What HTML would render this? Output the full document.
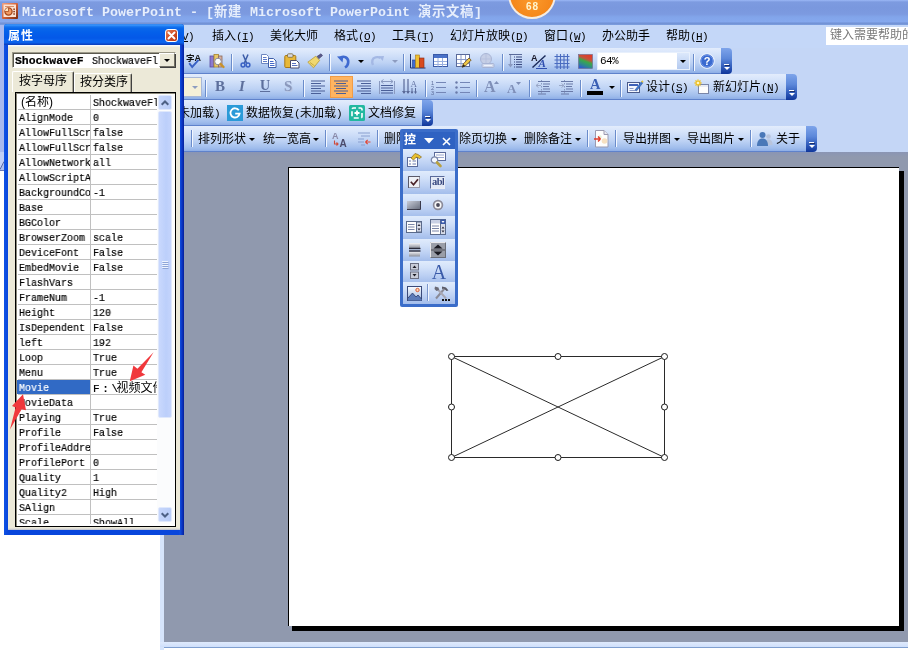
<!DOCTYPE html>
<html lang="zh-CN">
<head>
<meta charset="utf-8">
<title>Microsoft PowerPoint</title>
<style>
*{box-sizing:border-box;margin:0;padding:0}
html,body{width:908px;height:650px;overflow:hidden;background:#fff}
body{position:relative;font-family:"Liberation Sans","Noto Sans CJK SC",sans-serif;font-size:12px;color:#000;line-height:1}
.a{position:absolute}
svg{position:absolute;overflow:visible;will-change:transform}
/* app title bar */
#title{left:0;top:0;width:908px;height:25px;background:linear-gradient(#9bb8f6 0,#7d9be0 2px,#7a98de 8px,#7c9ae0 14px,#82a5ea 17px,#85a8ee 22px,#6f8fd3 23px,#7d9fe0 25px)}
#ttext{left:22px;top:3.5px;height:18px;white-space:nowrap;font:bold 13.33px/18px "Liberation Mono","Noto Sans CJK SC",monospace;color:#e6eefc}
#ttext b{font-weight:bold;letter-spacing:.67px}
#badge{left:508px;top:-30px;width:48px;height:48.500px;border-radius:50%;border:2px solid #f4ece2;background:radial-gradient(circle at 50% 60%,#fb9a2c 0,#f4861a 60%,#ee7c12 100%)}
#badget{left:518px;top:1px;width:28px;height:12px;text-align:center;font:bold 10px/12px "Liberation Sans",sans-serif;color:#fff6cf;letter-spacing:1px;text-indent:1px}
/* menu bar */
#menubar{left:0;top:25px;width:908px;height:23px;background:#c4d7f8}
.mi{position:absolute;top:29px;height:14px;line-height:14px;white-space:nowrap;font-size:12px}
.l{font-family:"Liberation Mono",monospace;font-size:11px;letter-spacing:-0.6px}
.u{text-decoration:underline}
#ask{left:826px;top:27px;width:82px;height:18px;background:#fff;color:#7a7a7a;font-size:12px;line-height:16px;padding-left:4px;white-space:nowrap;overflow:hidden}
/* toolbars */
#dock{left:0;top:48px;width:908px;height:104px;background:#c4d6f6}
.tb{position:absolute;height:26px;background:linear-gradient(#e3ecfc 0,#d5e3fa 6px,#bdd2f4 15px,#a0bdec 22px,#8eaee6 25px,#5f82cb 25px,#5f82cb 26px);border-radius:0 3px 3px 0}
.cap{position:absolute;width:11px;height:26px;border-radius:0 4px 4px 0;background:linear-gradient(#7ea4ea 0,#5c88da 40%,#2d58b8 75%,#10369a 100%)}
.cap:before{content:"";position:absolute;left:3px;top:16px;width:5px;height:1px;background:#fff;box-shadow:1px 1px 0 #1a2f6a}
.cap:after{content:"";position:absolute;left:3px;top:19px;border:3px solid transparent;border-top:3px solid #fff;border-bottom:0;width:0;height:0}
.sep{position:absolute;width:1px;height:17px;background:#6a8ccb;box-shadow:1px 0 0 #f4f8ff}
.tt{position:absolute;height:14px;line-height:14px;white-space:nowrap;font-size:12px}
.dd{position:absolute;width:0;height:0;border:3px solid transparent;border-top:3px solid #000;border-bottom:0}
.dd.g{border-top-color:#8d9cc0}
/* workspace */
#lstrip{left:160px;top:535px;width:4px;height:115px;background:#d6e4fb}
#ws{left:164px;top:152px;width:744px;height:490px;background:linear-gradient(#8a95b4 0,#9099ae 5px,#9099ae 100%)}
#bstrip{left:160px;top:642px;width:748px;height:5px;background:linear-gradient(#dfeafd,#cfdffa)}
#bline{left:164px;top:647px;width:744px;height:3px;background:linear-gradient(#7f9fd0 0,#7f9fd0 1px,#fff 1px)}
#slsh{left:292px;top:171px;width:612px;height:460px;background:#000}
#slide{left:288px;top:167px;width:611px;height:459px;background:#fff;border:1px solid #000;border-right:0;border-bottom:0}
/* props window */
#pw{left:4px;top:24px;width:180px;height:511px;background:linear-gradient(90deg,#0f52e4 0,#0846dc 4px,#0846dc 175px,#0f4ee0 176px,#0a36c4 178px,#061f9a 180px);border-radius:3px 3px 0 0}
#pwt{left:0;top:0;width:180px;height:21px;border-radius:3px 3px 0 0;background:linear-gradient(#2a78e6 0,#3f9cff 1px,#2280f4 2px,#0a68ea 4px,#0460ea 8px,#0458e8 14px,#0a64ee 17px,#0a60ea 19px,#0a42c2 20px,#0a42c2 21px)}
#pwtt{left:4px;top:5px;height:14px;line-height:14px;font-weight:bold;font-size:12px;color:#fff;letter-spacing:1px;white-space:nowrap}
#pwx{left:161px;top:5px;width:13px;height:13px;border:1px solid #fff;border-radius:3px;background:linear-gradient(135deg,#e8825a 0,#d2522a 45%,#b8340e 100%)}
#pwc{left:4px;top:21px;width:172px;height:485px;background:linear-gradient(#f6f9fc 0,#f6f9fc 1px,#ece9d8 2px,#ece9d8 483px,#b9bcd0 485px)}
#combo{left:8px;top:28px;width:164px;height:16px;background:#fff;border:1px solid #9d9a8a;border-right-color:#fff;border-bottom-color:#fff;box-shadow:inset 1px 1px 0 #5a584e}
#combob{left:155px;top:29px;width:16px;height:14px;background:#ece9d8;border:1px solid #fff;border-right-color:#716f64;border-bottom-color:#716f64;box-shadow:1px 1px 0 #404040}
.mono{font-family:"Liberation Mono","Noto Sans CJK SC",monospace;font-size:11px;line-height:14px;white-space:nowrap;transform:scaleX(.909);transform-origin:0 0;display:block;position:absolute}
.tab{position:absolute;background:#ece9d8;border:1px solid #fff;border-right-color:#404040;border-bottom:0;border-radius:2px 2px 0 0;font-size:12px;line-height:14px;white-space:nowrap;box-shadow:inset -1px 0 0 #aca899}
#list{left:11px;top:68px;width:161px;height:435px;background:#fff;border:1px solid #000;box-shadow:inset 1px 1px 0 #8c8a7c;padding:1px;overflow:hidden}
#listi{left:1px;top:1px;width:158px;height:430px;overflow:hidden}
.r{position:absolute;left:1px;width:139px;height:15px;border-top:1px solid #c0c0c0}
.r .k{position:absolute;left:0;top:1px;width:72px;height:14px;overflow:hidden}
.r .v{position:absolute;left:72px;top:0;width:67px;height:15px;overflow:hidden;border-left:1px solid #c0c0c0}
.r .k span{left:1px;top:0}
.r .v span{left:2px;top:1px}
.r.sel .k{background:#316ac5;color:#fff}
#sb{left:140px;top:0;width:18px;height:431px;background:#fbfcfd}
.sbb{position:absolute;left:1px;width:14px;height:15px;border-radius:2px;background:linear-gradient(90deg,#c6d6fb,#b9cdf8);border:1px solid #dfe8fc}
#thumb{position:absolute;left:1px;top:17px;width:14px;height:307px;border-radius:2px;background:linear-gradient(90deg,#c9d8fd,#bccffb 60%,#c4d4fc);border:1px solid #dfe8fc}
/* toolbox */
#tbx{left:400px;top:129px;width:58px;height:178px;background:#3b6dc9;border-radius:2px}
#tbxt{left:3px;top:3px;width:52px;height:17px;background:#2f62c2}
.tr{position:absolute;left:3px;width:52px;height:22px;background:linear-gradient(#e0ebfc 0,#d2e1f9 30%,#bcd0f3 65%,#a3bdeb 100%)}
#listi .r:first-child{border-top-color:transparent}
.cj{position:absolute;top:1px;font:12px/14px "Liberation Sans","Noto Sans CJK SC",sans-serif;white-space:nowrap}
.r .k .cj{top:0}
.mi,.tt,.mono,.cj,.tab,#ttext,#pwtt,#ask,#badget{will-change:transform}
.mono{-webkit-text-stroke:.2px #000}
.r.sel .k .mono{-webkit-text-stroke:.2px #fff}
.r.sel .k{left:-1px;top:0;width:73px;height:14px}
.r.sel .k .mono{left:2px;top:1px}
.lm{font-family:"Liberation Mono",monospace;font-size:11px;letter-spacing:2.7px;margin-right:-4.4px;-webkit-text-stroke:.2px #000}
.a,#tbx div{will-change:transform}

</style>
</head>
<body>
<div class="a" id="title"></div>
<svg style="left:2px;top:3px" width="16" height="16" viewBox="0 0 16 16"><defs><linearGradient id="pig" x1="0" y1="0" x2="1" y2="1"><stop offset="0" stop-color="#f0a080"/><stop offset=".5" stop-color="#d2623a"/><stop offset="1" stop-color="#7a2a0c"/></linearGradient></defs><rect x="0" y="0" width="16" height="16" rx="1" fill="url(#pig)"/><rect x="1.500" y="1.500" width="12.500" height="12.500" fill="#fce3d2"/><path d="M3 3.500h9" stroke="#d9906c" stroke-width="1"/><circle cx="6.500" cy="8.500" r="3.600" fill="#f19a62" stroke="#a8481a" stroke-width="1.300"/><path d="M6.500 8.500V5A3.500 3.500 0 0 0 3 8.500z" fill="#fde6c4"/><path d="M6.500 8.500V5M6.500 8.500H3" stroke="#a8481a" stroke-width=".8"/><rect x="11.300" y="5.500" width="1.600" height="1.400" fill="#8a3510"/><rect x="11.300" y="7.900" width="1.600" height="1.400" fill="#8a3510"/><rect x="11.300" y="10.300" width="1.600" height="1.400" fill="#8a3510"/></svg>
<div class="a" id="ttext">Microsoft PowerPoint - [<b>新建</b> Microsoft PowerPoint <b>演示文稿</b>]</div>
<div class="a" id="badge"></div><div class="a" id="badget">68</div>
<div class="a" id="menubar"></div>
<div class="mi" style="left:181.5px"><span class="l"><span class="u">V</span>)</span></div>
<div class="mi" style="left:211.5px">插入<span class="l">(<span class="u">I</span>)</span></div>
<div class="mi" style="left:269.5px">美化大师</div>
<div class="mi" style="left:333.5px">格式<span class="l">(<span class="u">O</span>)</span></div>
<div class="mi" style="left:391.5px">工具<span class="l">(<span class="u">T</span>)</span></div>
<div class="mi" style="left:449.5px">幻灯片放映<span class="l">(<span class="u">D</span>)</span></div>
<div class="mi" style="left:543.5px">窗口<span class="l">(<span class="u">W</span>)</span></div>
<div class="mi" style="left:601.5px">办公助手</div>
<div class="mi" style="left:665.5px">帮助<span class="l">(<span class="u">H</span>)</span></div>
<div class="a" id="ask">键入需要帮助的</div>
<div class="a" id="dock"></div>
<div class="tb" style="left:0;top:48px;width:723px"></div><div class="cap" style="left:721px;top:48px"></div>
<div class="tb" style="left:0;top:74px;width:788px"></div><div class="cap" style="left:786px;top:74px"></div>
<div class="tb" style="left:0;top:100px;width:424px"></div><div class="cap" style="left:422px;top:100px"></div>
<div class="tb" style="left:0;top:126px;width:808px"></div><div class="cap" style="left:806px;top:126px"></div>
<svg style="left:186px;top:53px" width="16" height="16" viewBox="0 0 16 16"><text x="0" y="7.5" font-family="Noto Sans CJK SC,sans-serif" font-size="8.5" font-weight="bold" fill="#111">字</text><text x="8.5" y="8" font-family="Liberation Sans,sans-serif" font-size="9" font-weight="bold" fill="#111">A</text><path d="M3.2 10.2L6.2 14L12.6 6.8" fill="none" stroke="#3a62c4" stroke-width="1.9"/></svg>
<svg style="left:209px;top:53px" width="16" height="16" viewBox="0 0 16 16"><rect x="1" y="3" width="4" height="11" fill="#8c7ad0" stroke="#5a4aa0" stroke-width=".8"/><rect x="5" y="1.5" width="4.5" height="12.5" fill="#e9c86a" stroke="#a8842a" stroke-width=".8"/><rect x="9.5" y="3" width="3.5" height="11" fill="#d9b0a0" stroke="#8a6a5a" stroke-width=".8"/><circle cx="9" cy="8.5" r="3.3" fill="#fdfdfd" stroke="#8a8a98" stroke-width="1"/><path d="M11.5 11L14.5 14" stroke="#c8922a" stroke-width="2.4" stroke-linecap="round"/></svg>
<div class="sep" style="left:231px;top:54px"></div>
<svg style="left:240px;top:53px" width="11" height="16" viewBox="0 0 11 16"><path d="M3 1.5L6.6 10M8 1.5L4.400 10" stroke="#3d5da8" stroke-width="1.500" fill="none"/><circle cx="3" cy="12" r="1.900" fill="none" stroke="#3a62c4" stroke-width="1.500"/><circle cx="8" cy="12" r="1.900" fill="none" stroke="#3a62c4" stroke-width="1.500"/></svg>
<svg style="left:261px;top:53px" width="16" height="16" viewBox="0 0 16 16"><path d="M.5 1.5h5l2 2v7h-7z" fill="#fff" stroke="#6d86c0"/><path d="M2 4.500h3.500M2 6.500h4M2 8.500h4" stroke="#5d7ac8"/><path d="M7.500 5.500h5l2.500 2.500v6.500h-7.500z" fill="#fff" stroke="#3f5ea8"/><path d="M9 8.500h3.500M9 10.500h4.500M9 12.500h4.500" stroke="#4468c8"/></svg>
<svg style="left:284px;top:53px" width="16" height="16" viewBox="0 0 16 16"><rect x=".8" y="2.500" width="11" height="12" rx="1" fill="#e8b838" stroke="#a87818"/><rect x="3.500" y=".8" width="5.500" height="3.500" rx="1" fill="#d8d8e0" stroke="#7a6a3a" stroke-width=".8"/><path d="M6.500 7.500h6l2.500 2.500v5h-8.500z" fill="#fff" stroke="#4a4a6a"/><path d="M8 10.500h4M8 12.500h5.500" stroke="#5a72c0"/></svg>
<svg style="left:307px;top:53px" width="16" height="16" viewBox="0 0 16 16"><path d="M10 3.5L14 .8L15.5 2.6L11.8 5.8z" fill="#5a5a8a" stroke="#3a3a6a" stroke-width=".6"/><path d="M8.8 3.2L12.6 7.4L6.5 14.8L.8 9.2z" fill="#f0d870" stroke="#b89a30" stroke-width=".8"/><path d="M3 9.5L7.5 12.8" stroke="#c8aa40" stroke-width="1"/></svg>
<div class="sep" style="left:329px;top:54px"></div>
<svg style="left:336px;top:53px" width="16" height="16" viewBox="0 0 16 16"><path d="M9 14.5C13 12 13.5 6 9.5 4.2C8 3.6 6 3.8 4.5 5" fill="none" stroke="#3f6ad0" stroke-width="2.6"/><path d="M1 3.5L7.5 3L6.5 9.5z" fill="#3f6ad0"/></svg>
<div class="dd" style="left:358px;top:60px"></div>
<svg style="left:370px;top:53px" width="16" height="16" viewBox="0 0 16 16"><path d="M3 12C1.5 9 2 5.2 5.5 4.4C7 4 9 4 10.5 5" fill="none" stroke="#a4b8e4" stroke-width="2.4"/><path d="M14 3L8.5 3.2L12.8 8z" fill="#a4b8e4"/></svg>
<div class="dd g" style="left:392px;top:60px"></div>
<div class="sep" style="left:403px;top:54px"></div>
<svg style="left:410px;top:53px" width="16" height="16" viewBox="0 0 16 16"><path d="M.5 1v14h15" fill="none" stroke="#1f2f6a" stroke-width="1"/><rect x="2.5" y="7" width="3" height="7.5" fill="#3f6ad0" stroke="#1f3f8a" stroke-width=".6"/><rect x="5.5" y="2" width="4" height="12.5" fill="#f0c030" stroke="#a87818" stroke-width=".6"/><rect x="9.5" y="5" width="4.5" height="9.5" fill="#d84a20" stroke="#8a2a10" stroke-width=".6"/></svg>
<svg style="left:433px;top:53px" width="16" height="16" viewBox="0 0 16 16"><rect x=".5" y="1.5" width="14" height="12" fill="#fff" stroke="#3a5aa8"/><rect x="1" y="2" width="13" height="3" fill="#4a72c8"/><path d="M1 8.5h13M1 11.5h13M5 5v8.5M9.5 5v8.5" stroke="#9ab0e0" stroke-width="1"/></svg>
<svg style="left:456px;top:53px" width="16" height="16" viewBox="0 0 16 16"><rect x=".5" y="1.5" width="13" height="12" fill="#fff" stroke="#5a6a9a"/><path d="M1 6.5h12.5M1 10.5h12.5M5 2v11.5M9.5 2v11.5" stroke="#8a9ac8" stroke-width="1"/><path d="M6.2 14.2L7.2 11L13 5L15.2 7L9.4 13z" fill="#f0c848" stroke="#6a4a1a" stroke-width=".8"/><path d="M6 14.6L7.3 11.2L9.3 13z" fill="#222"/></svg>
<svg style="left:479px;top:53px" width="16" height="16" viewBox="0 0 16 16"><circle cx="7" cy="6" r="5.5" fill="#c6cfe6" stroke="#a8b4d4"/><path d="M2 6h10M7 .8v10.4" stroke="#b4bedc" stroke-width=".8"/><rect x="3" y="10.5" width="12" height="4" rx="1" fill="#d0d8ec" stroke="#a8b4d4"/><path d="M5 12.5h8" stroke="#eef2fb"/></svg>
<div class="sep" style="left:502px;top:54px"></div>
<svg style="left:507px;top:53px" width="17" height="16" viewBox="0 0 17 16"><path d="M3.5 1.5v12" stroke="#8a9ac0" stroke-width="1.2"/><path d="M1 11l2.5 3.5L6 11z" fill="#8a9ac0"/><path d="M2 1.5h13" stroke="#5a6a9a" stroke-width="1"/><path d="M9 4h6M9 6.5h6M9 9h6M9 11.5h6M9 14h6" stroke="#3a4a80" stroke-width="1.2"/><path d="M7 4h1M7 6.5h1M7 9h1M7 11.5h1M7 14h1" stroke="#3a4a80" stroke-width="1.2"/></svg>
<svg style="left:531px;top:53px" width="16" height="16" viewBox="0 0 16 16"><text x="0" y="8" font-family="Liberation Sans,sans-serif" font-size="9" font-weight="bold" fill="#1a1a2a">A</text><path d="M1.5 14.5L14.5 2.5" stroke="#1a2a5a" stroke-width="1.4"/><text x="7.5" y="14.2" font-family="Liberation Serif,serif" font-size="11" font-weight="bold" font-style="italic" fill="#2f4fb0">A</text><path d="M5 15.5h11" stroke="#2f4fb0" stroke-width="1"/></svg>
<svg style="left:554px;top:53px" width="16" height="16" viewBox="0 0 16 16"><path d="M3 1v15M6.5 1v15M10 1v15M13.5 1v15M.5 3.5h15M.5 7h15M.5 10.500h15M.5 14h15" stroke="#4a6cc0" stroke-width="1.1"/></svg>
<svg style="left:578px;top:54px" width="15" height="15" viewBox="0 0 15 15"><defs><linearGradient id="cg" x1=".7" y1="0" x2=".3" y2="1"><stop offset="0" stop-color="#e03a28"/><stop offset=".3" stop-color="#c8503a"/><stop offset=".5" stop-color="#3aa84a"/><stop offset=".75" stop-color="#2f8a8a"/><stop offset="1" stop-color="#2f5ad0"/></linearGradient></defs><rect x=".5" y=".5" width="14" height="14" fill="url(#cg)" stroke="#6a6a8a" stroke-width=".6"/></svg>
<div class="a" style="left:597px;top:52px;width:93px;height:18px;background:#fff;border:1px solid #e8f0fc"></div>
<div class="a" style="left:677px;top:53px;width:12px;height:16px;background:linear-gradient(#dce8fb,#b4caf0)"></div>
<div class="dd" style="left:680px;top:60px"></div>
<div class="tt" style="left:600px;top:53px"><span class="l">64%</span></div>
<div class="sep" style="left:693px;top:54px"></div>
<svg style="left:699px;top:53px" width="16" height="16" viewBox="0 0 16 16"><circle cx="8" cy="8" r="7.3" fill="#3a6ad0" stroke="#e8f0fc" stroke-width="1.2"/><circle cx="8" cy="8" r="6" fill="none" stroke="#6f94e6" stroke-width="1"/><text x="8" y="12" text-anchor="middle" font-family="Liberation Sans,sans-serif" font-size="11" font-weight="bold" fill="#fff">?</text></svg>
<div class="a" style="left:160px;top:77px;width:42px;height:20px;background:#f6f0d8;border:1px solid #a8b8d8"></div>
<div class="dd g" style="left:192px;top:86px"></div>
<div class="sep" style="left:205px;top:80px"></div>
<div class="a" style="left:215px;top:78px;width:12px;height:17px;font:bold 15px/17px 'Liberation Serif',serif;color:#5d6f9c">B</div>
<div class="a" style="left:239px;top:78px;width:12px;height:17px;font:italic bold 15px/17px 'Liberation Serif',serif;color:#5d6f9c">I</div>
<div class="a" style="left:260px;top:78px;width:12px;height:17px;font:bold 14px/16px 'Liberation Serif',serif;color:#5d6f9c;text-decoration:underline">U</div>
<div class="a" style="left:284px;top:78px;width:12px;height:17px;font:bold 15px/17px 'Liberation Serif',serif;color:#8a98bc;text-shadow:1px 1px 0 #b8c6e4">S</div>
<div class="sep" style="left:303px;top:80px"></div>
<svg style="left:311px;top:80px" width="14" height="15" viewBox="0 0 14 15"><path d="M0 1h14M0 3.500h10M0 6h14M0 8.500h10M0 11h14M0 13.500h10" stroke="#4a5f98" stroke-width="1.2"/></svg>
<div class="a" style="left:330px;top:76px;width:23px;height:22px;background:#ffb460;border:1px solid #f29c45"></div>
<svg style="left:334px;top:80px" width="14" height="15" viewBox="0 0 14 15"><path d="M0 1h14M2 3.500h10M0 6h14M2 8.500h10M0 11h14M2 13.500h10" stroke="#4a5f98" stroke-width="1.2"/></svg>
<svg style="left:357px;top:80px" width="14" height="15" viewBox="0 0 14 15"><path d="M0 1h14M4 3.500h10M0 6h14M4 8.500h10M0 11h14M4 13.500h10" stroke="#4a5f98" stroke-width="1.2"/></svg>
<svg style="left:379px;top:79px" width="16" height="16" viewBox="0 0 16 16"><path d="M.5 2v13M15.500 2v13" stroke="#8a9ac0" stroke-width="1"/><path d="M2 2.500h12M2 2.500l2.500-2M2 2.500l2.500 2M14 2.500l-2.500-2M14 2.500l-2.500 2" stroke="#8a9ac0" stroke-width="1" fill="none"/><path d="M2 6.500h12M2 9h12M2 11.500h12M2 14h12" stroke="#4a5f98" stroke-width="1.2"/></svg>
<svg style="left:402px;top:79px" width="16" height="16" viewBox="0 0 16 16"><path d="M2 0v14M6 0v14" stroke="#5a6a98" stroke-width="1.2"/><path d="M0 12l2 3l2-3zM4 12l2 3l2-3z" fill="#5a6a98"/><text x="8.500" y="8" font-family="Liberation Serif,serif" font-size="9" fill="#6a7aa8">A</text><path d="M10 9v5M13.500 9v5" stroke="#5a6a98" stroke-width="1"/><path d="M8.500 12.500l1.500 2.500l1.500-2.500zM12 12.500l1.500 2.500l1.500-2.500z" fill="#5a6a98"/></svg>
<div class="sep" style="left:425px;top:80px"></div>
<svg style="left:431px;top:80px" width="15" height="15" viewBox="0 0 15 15"><text x="0" y="4.500" font-family="Liberation Sans,sans-serif" font-size="5.500" fill="#5a6a98">1</text><text x="0" y="9.500" font-family="Liberation Sans,sans-serif" font-size="5.500" fill="#5a6a98">2</text><text x="0" y="14.500" font-family="Liberation Sans,sans-serif" font-size="5.500" fill="#5a6a98">3</text><path d="M5 2.500h10M5 7.500h10M5 12.500h10" stroke="#7486b6" stroke-width="1.2"/></svg>
<svg style="left:455px;top:80px" width="15" height="15" viewBox="0 0 15 15"><circle cx="1.500" cy="2.500" r="1.200" fill="#6a7aa8"/><circle cx="1.500" cy="7.500" r="1.200" fill="#6a7aa8"/><circle cx="1.500" cy="12.500" r="1.200" fill="#6a7aa8"/><path d="M5 2.500h10M5 7.500h10M5 12.500h10" stroke="#7486b6" stroke-width="1.2"/></svg>
<div class="sep" style="left:476px;top:80px"></div>
<div class="a" style="left:484px;top:78px;width:12px;height:18px;font:bold 16px/18px 'Liberation Serif',serif;color:#7f8fb8">A</div>
<svg style="left:494px;top:80px" width="5" height="5" viewBox="0 0 5 5"><path d="M0 4l2.500-3l2.500 3z" fill="#7f8fb8"/></svg>
<div class="a" style="left:507px;top:81px;width:10px;height:15px;font:bold 13px/15px 'Liberation Serif',serif;color:#7f8fb8">A</div>
<svg style="left:516px;top:81px" width="5" height="5" viewBox="0 0 5 5"><path d="M0 1l2.500 3l2.500-3z" fill="#7f8fb8"/></svg>
<div class="sep" style="left:529px;top:80px"></div>
<svg style="left:536px;top:80px" width="15" height="15" viewBox="0 0 15 15"><path d="M5.500 0v15" stroke="#8a9ac0" stroke-dasharray="1.500 1.500"/><path d="M0 5.500h5M0 5.500l2.500-2M0 5.500l2.500 2" stroke="#9aa8c8" fill="none"/><path d="M2 1.500h12M7 4h7M7 6.500h6M7 9h7M2 11.500h12M2 14h8" stroke="#6a7aa8" stroke-width="1.100"/></svg>
<svg style="left:559px;top:80px" width="15" height="15" viewBox="0 0 15 15"><path d="M5.500 0v15" stroke="#8a9ac0" stroke-dasharray="1.500 1.500"/><path d="M0 5.500h5M5 5.500l-2.500-2M5 5.500l-2.500 2" stroke="#9aa8c8" fill="none"/><path d="M2 1.500h12M7 4h7M7 6.500h6M7 9h7M2 11.500h12M2 14h8" stroke="#6a7aa8" stroke-width="1.100"/></svg>
<div class="sep" style="left:580px;top:80px"></div>
<div class="a" style="left:590px;top:77px;width:12px;height:15px;font:bold 14.500px/15px 'Liberation Serif',serif;color:#3a5fb4">A</div>
<div class="a" style="left:587px;top:91px;width:16px;height:4px;background:#000"></div>
<div class="dd" style="left:609px;top:86px"></div>
<div class="sep" style="left:620px;top:80px"></div>
<svg style="left:627px;top:79px" width="17" height="16" viewBox="0 0 17 16"><rect x=".500" y="3.500" width="12" height="10" fill="#f4f7fd" stroke="#4a5a8a"/><rect x="2" y="5" width="9" height="2" fill="#3f62b8"/><path d="M2.500 9.500h4M2.500 11.500h6" stroke="#8a9ac8"/><path d="M8 11l6.500-8.500l1.500 1.200l-6.500 8.300z" fill="#3f7ad0" stroke="#2a4a90" stroke-width=".5"/><path d="M14 2.800L15.200 1.200L16.500 2.400L15.600 3.800z" fill="#e8c840"/></svg>
<div class="tt" style="left:646px;top:80px">设计<span class="l">(<span class="u">S</span>)</span></div>
<svg style="left:694px;top:79px" width="16" height="16" viewBox="0 0 16 16"><rect x="4.500" y="5.500" width="10" height="9" fill="#fdfdfd" stroke="#7a86a8"/><rect x="5" y="6" width="9" height="2" fill="#e8ecf6"/><path d="M4 .5v7M.5 4h7M1.500 1.500l5 5M6.500 1.500l-5 5" stroke="#f0c020" stroke-width="1.300"/><circle cx="4" cy="4" r="1.300" fill="#fff6c0"/></svg>
<div class="tt" style="left:713px;top:80px">新幻灯片<span class="l">(<span class="u">N</span>)</span></div>
<div class="tt" style="left:178px;top:106px">未加载<span class="l">)</span></div>
<svg style="left:227px;top:105px" width="16" height="16" viewBox="0 0 16 16"><rect x="0" y="0" width="16" height="16" fill="#2a9ad8"/><path d="M11.800 5.200A4.600 4.600 0 1 0 12.600 8.600H8.200" fill="none" stroke="#fff" stroke-width="1.800"/></svg>
<div class="tt" style="left:245.5px;top:106px">数据恢复<span class="l">(</span>未加载<span class="l">)</span></div>
<svg style="left:349px;top:105px" width="16" height="16" viewBox="0 0 16 16"><rect x="0" y="0" width="16" height="16" rx="1.500" fill="#22b8a0"/><rect x="3" y="3" width="10" height="10" rx="1.500" fill="none" stroke="#fff" stroke-width="1.600" stroke-dasharray="5 2.500" stroke-dashoffset="2.500"/><path d="M8 5.500v5M5.500 8h5" stroke="#fff" stroke-width="1.800"/></svg>
<div class="tt" style="left:367.5px;top:106px">文档修复</div>
<div class="sep" style="left:191px;top:130px"></div>
<div class="tt" style="left:198px;top:132px">排列形状</div>
<div class="dd" style="left:249px;top:138px"></div>
<div class="tt" style="left:262.5px;top:132px">统一宽高</div>
<div class="dd" style="left:312.5px;top:138px"></div>
<div class="sep" style="left:325px;top:130px"></div>
<svg style="left:332px;top:131px" width="16" height="16" viewBox="0 0 16 16"><text x="0" y="8" font-family="Liberation Sans,sans-serif" font-size="9" font-weight="bold" fill="#8a8aa8">A</text><text x="7.500" y="15.500" font-family="Liberation Sans,sans-serif" font-size="10" font-weight="bold" fill="#4a4a6a">A</text><path d="M2.500 9.500v3.500h3.500M4.500 11.500l1.500 1.500l-1.500 1.500" fill="none" stroke="#d04a3a" stroke-width="1.100"/></svg>
<svg style="left:355px;top:131px" width="16" height="16" viewBox="0 0 16 16"><path d="M3 2h12M6 5h9M3 8h6M3 11h6M6 14h4" stroke="#8aa0d0" stroke-width="1.100"/><path d="M15.500 11h-5M10.500 11l2.200-2.200M10.500 11l2.200 2.200" fill="none" stroke="#e04a3a" stroke-width="1.200"/></svg>
<div class="sep" style="left:377px;top:130px"></div>
<div class="tt" style="left:384px;top:132px">删除</div>
<div class="tt" style="left:447px;top:132px">删除页切换</div>
<div class="dd" style="left:511px;top:138px"></div>
<div class="tt" style="left:524px;top:132px">删除备注</div>
<div class="dd" style="left:575px;top:138px"></div>
<div class="sep" style="left:587px;top:130px"></div>
<svg style="left:594px;top:130px" width="15" height="18" viewBox="0 0 15 18"><path d="M1.500 .5h8.500l4 4v12.500h-12.500z" fill="#fdfdfd" stroke="#9a9ab0"/><path d="M10 .5v4h4" fill="#e8e8f0" stroke="#9a9ab0"/><circle cx="10.500" cy="11" r="2.800" fill="#f6e0c0"/><circle cx="6" cy="7" r="1.800" fill="#e8f0d8"/><path d="M0 9h6.500M6.500 9l-2.500-2.500M6.500 9l-2.500 2.500" fill="none" stroke="#e03a2a" stroke-width="1.400"/></svg>
<div class="sep" style="left:615px;top:130px"></div>
<div class="tt" style="left:622.5px;top:132px">导出拼图</div>
<div class="dd" style="left:674px;top:138px"></div>
<div class="tt" style="left:687px;top:132px">导出图片</div>
<div class="dd" style="left:737.5px;top:138px"></div>
<div class="sep" style="left:750px;top:130px"></div>
<svg style="left:757px;top:131px" width="16" height="16" viewBox="0 0 16 16"><circle cx="11.500" cy="5.500" r="2.300" fill="#b8c4dc"/><path d="M7.500 14c0-4 1.500-5.500 4-5.500s4 1.500 4 5.500z" fill="#b8c4dc"/><circle cx="5.500" cy="4" r="3" fill="#4a78b8"/><path d="M0 15c0-5 2-7.500 5.500-7.500s5.500 2.500 5.500 7.500z" fill="#4a78b8"/></svg>
<div class="tt" style="left:776px;top:132px">关于</div>

<div class="a" style="left:0;top:25px;width:4px;height:127px;background:#a8b9ee"></div><div class="a" style="left:0;top:152px;width:4px;height:19px;background:#c1cff6"></div><svg style="left:0;top:160px" width="4" height="11" viewBox="0 0 4 11"><path d="M0 11V9.500L4 1.500V11z" fill="#aebff0"/><path d="M0 9.500L4 1.500" stroke="#5a6aa8" stroke-width="1" fill="none"/><path d="M0 10.500h4" stroke="#6a7ab8" stroke-width="1"/></svg>
<div class="a" id="ws"></div>
<div class="a" id="lstrip"></div><div class="a" id="bstrip"></div><div class="a" id="bline"></div>
<div class="a" id="slsh"></div><div class="a" id="slide"></div>
<svg style="left:0;top:0" width="908" height="650" viewBox="0 0 908 650"><g fill="none" stroke="#2a2a2a" stroke-width="1"><rect x="451.5" y="356.5" width="213" height="101"/><path d="M451.5 356.5L664.5 457.5M451.5 457.5L664.5 356.5"/></g><g fill="#fff" stroke="#1a1a1a" stroke-width="1"><circle cx="451.5" cy="356.5" r="3"/><circle cx="558.0" cy="356.5" r="3"/><circle cx="664.5" cy="356.5" r="3"/><circle cx="451.5" cy="407.0" r="3"/><circle cx="664.5" cy="407.0" r="3"/><circle cx="451.5" cy="457.5" r="3"/><circle cx="558.0" cy="457.5" r="3"/><circle cx="664.5" cy="457.5" r="3"/></g></svg>
<div class="a" id="tbx">
<div class="a" id="tbxt"></div>
<div class="a" style="left:4px;top:3px;height:16px;font:bold 12px/16px 'Liberation Sans','Noto Sans CJK SC',sans-serif;color:#fff">控</div>
<svg style="left:24px;top:9px" width="10" height="6" viewBox="0 0 10 6"><path d="M0 0h10l-5 5.500z" fill="#fff"/></svg>
<svg style="left:42px;top:7.5px" width="9" height="9" viewBox="0 0 9 9"><path d="M1 1l7 7M8 1l-7 7" stroke="#fff" stroke-width="1.600"/></svg>
<div class="tr" style="top:19.5px;height:22.5px"></div>
<div class="tr" style="top:42px;height:22.5px"></div>
<div class="tr" style="top:64.5px;height:22.5px"></div>
<div class="tr" style="top:87px;height:22.5px"></div>
<div class="tr" style="top:109.5px;height:22px"></div>
<div class="tr" style="top:131.5px;height:21.5px"></div>
<div class="tr" style="top:153px;height:22px"></div>
<svg style="left:6px;top:22.75px" width="16" height="16" viewBox="0 0 16 16"><rect x="1.500" y="5.500" width="10" height="9" fill="#fdfdfd" stroke="#5a6a9a"/><path d="M3 9h2M6.500 9h3.500M3 12h2M6.500 12h3.500" stroke="#6a7ab0"/><path d="M5 6l4-4.500l3 1l3.500 2.500l-2 1.500l-3-1.500l-3 3z" fill="#e8c030" stroke="#8a6a1a" stroke-width=".7"/></svg>
<svg style="left:30px;top:22.75px" width="16" height="16" viewBox="0 0 16 16"><rect x="4.500" y=".5" width="11" height="8" fill="#fdfdfd" stroke="#5a6a9a"/><path d="M6 3h8M6 5.500h8" stroke="#9aa8d0"/><circle cx="4.500" cy="8" r="3.200" fill="#f4f8ff" stroke="#7a86a8" stroke-width="1.200"/><path d="M7 10.500l3.500 3.500" stroke="#b8a040" stroke-width="2.600" stroke-linecap="round"/></svg>
<svg style="left:6.5px;top:46.25px" width="14" height="14" viewBox="0 0 14 14"><rect x="1.500" y="1.500" width="11" height="11" fill="#eef0f6" stroke="#9a9aa8"/><path d="M1.500 13V1.500H13" fill="none" stroke="#5a5a6a"/><path d="M3.800 6.800l2.700 3l4.500-5.600" fill="none" stroke="#4a2228" stroke-width="1.700"/></svg>
<div class="a" style="left:30px;top:47px;width:15px;height:13px;border:1px solid #5a6a9a;border-right-color:#e8ecf6;border-bottom-color:#e8ecf6;background:#e4eaf6;font:bold 10.500px/10px 'Liberation Serif',serif;color:#3a4a80;letter-spacing:-.5px;padding-left:1px;overflow:hidden;white-space:nowrap">abl</div>
<svg style="left:5.5px;top:67.75px" width="15" height="16" viewBox="0 0 15 16"><defs><linearGradient id="bg1" x1="0" y1="0" x2="1" y2="1"><stop offset="0" stop-color="#c8ccd8"/><stop offset="1" stop-color="#6a7080"/></linearGradient></defs><rect x="1" y="4" width="13" height="8" fill="url(#bg1)"/><path d="M1 12.500h13.500V4" fill="none" stroke="#3a3a4a"/></svg>
<svg style="left:29.5px;top:67.75px" width="16" height="16" viewBox="0 0 16 16"><circle cx="8" cy="8" r="4.400" fill="#f8f8f8" stroke="#8a8a98" stroke-width="1.700"/><circle cx="8" cy="8" r="1.900" fill="#4a4a5a"/></svg>
<svg style="left:6px;top:90.25px" width="16" height="16" viewBox="0 0 16 16"><rect x=".5" y="2.500" width="15" height="11" fill="#fdfdfd" stroke="#5a6a8a"/><path d="M2 5.500h6.500M2 8h6.500M2 10.500h6.500" stroke="#7a86a8"/><rect x="10.500" y="3" width="5" height="10" fill="#d8dce8" stroke="#5a6a8a"/><path d="M11.500 7l1.500-2l1.500 2zM11.500 9.500l1.500 2l1.500-2z" fill="#2a2a3a"/></svg>
<svg style="left:30px;top:90.25px" width="16" height="16" viewBox="0 0 16 16"><rect x=".5" y=".5" width="15" height="15" fill="#fdfdfd" stroke="#5a6a8a"/><rect x="1" y="1" width="9" height="3.500" fill="#c8d0e4"/><rect x="10.500" y=".5" width="5" height="15" fill="#d8dce8" stroke="#5a6a8a"/><rect x="10.500" y=".5" width="5" height="4.500" fill="#3a5aa8"/><path d="M11.500 2l1.500 2l1.500-2z" fill="#fff"/><path d="M2 7h7M2 9.500h7M2 12h7" stroke="#7a86a8"/><path d="M11.500 9.500l1.500-2l1.500 2zM11.500 11.500l1.500 2l1.500-2z" fill="#2a2a3a"/></svg>
<svg style="left:6.5px;top:112.5px" width="15" height="16" viewBox="0 0 15 16"><defs><linearGradient id="bg2" x1="0" y1="0" x2="0" y2="1"><stop offset="0" stop-color="#f4f4f8"/><stop offset="1" stop-color="#8a8e9a"/></linearGradient></defs><rect x="2" y="1" width="11" height="5" fill="url(#bg2)"/><path d="M2 6.500h11.500" stroke="#2a2a3a" stroke-width="1.400"/><rect x="2" y="9.500" width="11" height="5" fill="url(#bg2)"/><path d="M2 9h11.500" stroke="#2a2a3a" stroke-width="1.400"/></svg>
<svg style="left:30px;top:112.5px" width="16" height="16" viewBox="0 0 16 16"><rect x=".5" y=".5" width="15" height="15" fill="#9a9ea8" stroke="#6a6e78"/><path d="M.5 15.500V.5H15.500" fill="none" stroke="#e8e8ec"/><path d="M3.500 6.500l4.500-4l4.500 4zM3.500 9.500l4.500 4l4.500-4z" fill="#1a1a22"/><path d="M1 8h14" stroke="#4a4a52"/></svg>
<svg style="left:6.5px;top:134.25px" width="15" height="16" viewBox="0 0 15 16"><rect x="3.500" y=".5" width="8" height="6.500" fill="#c8ccd8" stroke="#6a6e80"/><path d="M5.500 5l2-2.500l2 2.500z" fill="#1a1a22"/><rect x="3.500" y="9" width="8" height="6.500" fill="#c8ccd8" stroke="#6a6e80"/><path d="M5.500 11l2 2.500l2-2.500z" fill="#1a1a22"/></svg>
<div class="a" style="left:28.500px;top:132.500px;width:20px;height:20px;font:20px/20px 'Liberation Serif',serif;color:#3a5aa8;text-align:center">A</div>
<svg style="left:6.5px;top:156.5px" width="15" height="15" viewBox="0 0 15 15"><defs><linearGradient id="bg3" x1="0" y1="0" x2="0" y2="1"><stop offset="0" stop-color="#fdfeff"/><stop offset="1" stop-color="#9ab4e0"/></linearGradient></defs><rect x=".5" y=".5" width="14" height="14" fill="url(#bg3)" stroke="#3a4a7a"/><path d="M1 12l4.500-5l3.500 4l2-2l3.500 4v1.500h-13.500z" fill="#5a7ab8"/><path d="M1 12l4.500-5l3.500 4l2-2l3.500 4" fill="none" stroke="#2a3a6a" stroke-width=".8"/><circle cx="10.500" cy="4" r="1.700" fill="#f8d8b8" stroke="#d8522a" stroke-width=".9"/></svg>
<div class="a" style="left:27px;top:155px;width:1px;height:17px;background:#7a96cc;box-shadow:1px 0 0 #f0f5fd"></div>
<svg style="left:32.5px;top:155.5px" width="17" height="17" viewBox="0 0 17 17"><path d="M3 13.500L12 3" stroke="#8a8a96" stroke-width="2"/><path d="M9 1.500l4 1l2.500 3l-2 .5l-2.500-2.500l-2 .5z" fill="#5a5a66"/><path d="M13 13.500L4.500 4" stroke="#a8a8b4" stroke-width="2"/><path d="M2 1.500l3.500 1l.5 2.500l-2.500 1l-2-2z" fill="#6a6a76"/><rect x="9" y="14" width="2" height="2" fill="#111"/><rect x="12" y="14" width="2" height="2" fill="#111"/><rect x="15" y="14" width="2" height="2" fill="#111"/></svg>
</div>

<div class="a" id="pw">
<div class="a" id="pwt"></div><div class="a" id="pwtt">属性</div>
<div class="a" id="pwx"><svg style="left:0;top:0" width="11" height="11" viewBox="0 0 11 11"><path d="M2.5 2.5L8.5 8.5M8.5 2.5L2.5 8.5" stroke="#fff" stroke-width="2" stroke-linecap="round"/></svg></div>
<div class="a" id="pwc"></div>
<div class="a" id="combo"><span class="mono" style="left:2px;top:1px;font-weight:bold;transform:scaleX(1.04)">ShockwaveF</span><span class="mono" style="left:79px;top:1px">ShockwaveFl</span></div>
<div class="a" id="combob"><div class="dd" style="left:4px;top:5px"></div></div>
<div class="tab" style="left:8px;top:47px;width:62px;height:21px;padding:2px 0 0 6px;z-index:2">按字母序</div>
<div class="tab" style="left:70px;top:49px;width:58px;height:19px;padding:1px 0 0 5px">按分类序</div>
<div class="a" id="list"><div class="a" id="listi">
<div class="r" style="top:0px"><span class="k"><span class="cj" style="left:3px;top:-1px">(名称)</span></span><span class="v"><span class="mono">ShockwaveFl</span></span></div>
<div class="r" style="top:15px"><span class="k"><span class="mono">AlignMode</span></span><span class="v"><span class="mono">0</span></span></div>
<div class="r" style="top:30px"><span class="k"><span class="mono">AllowFullScr</span></span><span class="v"><span class="mono">false</span></span></div>
<div class="r" style="top:45px"><span class="k"><span class="mono">AllowFullScr</span></span><span class="v"><span class="mono">false</span></span></div>
<div class="r" style="top:60px"><span class="k"><span class="mono">AllowNetwork</span></span><span class="v"><span class="mono">all</span></span></div>
<div class="r" style="top:75px"><span class="k"><span class="mono">AllowScriptA</span></span><span class="v"><span class="mono"></span></span></div>
<div class="r" style="top:90px"><span class="k"><span class="mono">BackgroundCo</span></span><span class="v"><span class="mono">-1</span></span></div>
<div class="r" style="top:105px"><span class="k"><span class="mono">Base</span></span><span class="v"><span class="mono"></span></span></div>
<div class="r" style="top:120px"><span class="k"><span class="mono">BGColor</span></span><span class="v"><span class="mono"></span></span></div>
<div class="r" style="top:135px"><span class="k"><span class="mono">BrowserZoom</span></span><span class="v"><span class="mono">scale</span></span></div>
<div class="r" style="top:150px"><span class="k"><span class="mono">DeviceFont</span></span><span class="v"><span class="mono">False</span></span></div>
<div class="r" style="top:165px"><span class="k"><span class="mono">EmbedMovie</span></span><span class="v"><span class="mono">False</span></span></div>
<div class="r" style="top:180px"><span class="k"><span class="mono">FlashVars</span></span><span class="v"><span class="mono"></span></span></div>
<div class="r" style="top:195px"><span class="k"><span class="mono">FrameNum</span></span><span class="v"><span class="mono">-1</span></span></div>
<div class="r" style="top:210px"><span class="k"><span class="mono">Height</span></span><span class="v"><span class="mono">120</span></span></div>
<div class="r" style="top:225px"><span class="k"><span class="mono">IsDependent</span></span><span class="v"><span class="mono">False</span></span></div>
<div class="r" style="top:240px"><span class="k"><span class="mono">left</span></span><span class="v"><span class="mono">192</span></span></div>
<div class="r" style="top:255px"><span class="k"><span class="mono">Loop</span></span><span class="v"><span class="mono">True</span></span></div>
<div class="r" style="top:270px"><span class="k"><span class="mono">Menu</span></span><span class="v"><span class="mono">True</span></span></div>
<div class="r sel" style="top:285px"><span class="k"><span class="mono">Movie</span></span><span class="v"><span class="cj" style="left:2px"><span class="lm">F:\</span>视频文件</span></span></div>
<div class="r" style="top:300px"><span class="k"><span class="mono">MovieData</span></span><span class="v"><span class="mono"></span></span></div>
<div class="r" style="top:315px"><span class="k"><span class="mono">Playing</span></span><span class="v"><span class="mono">True</span></span></div>
<div class="r" style="top:330px"><span class="k"><span class="mono">Profile</span></span><span class="v"><span class="mono">False</span></span></div>
<div class="r" style="top:345px"><span class="k"><span class="mono">ProfileAddre</span></span><span class="v"><span class="mono"></span></span></div>
<div class="r" style="top:360px"><span class="k"><span class="mono">ProfilePort</span></span><span class="v"><span class="mono">0</span></span></div>
<div class="r" style="top:375px"><span class="k"><span class="mono">Quality</span></span><span class="v"><span class="mono">1</span></span></div>
<div class="r" style="top:390px"><span class="k"><span class="mono">Quality2</span></span><span class="v"><span class="mono">High</span></span></div>
<div class="r" style="top:405px"><span class="k"><span class="mono">SAlign</span></span><span class="v"><span class="mono"></span></span></div>
<div class="r" style="top:420px"><span class="k"><span class="mono">Scale</span></span><span class="v"><span class="mono">ShowAll</span></span></div>
<div class="a" id="sb"><div class="sbb" style="top:1px"><svg style="left:2px;top:3.5px" width="8" height="6" viewBox="0 0 8 6"><path d="M.7 4.8L4 1.5L7.3 4.8" fill="none" stroke="#4d6185" stroke-width="2"/></svg></div><div id="thumb"><svg style="left:2.5px;top:149px" width="6" height="8" viewBox="0 0 6 8"><path d="M0 .5h6M0 2.5h6M0 4.5h6M0 6.5h6" stroke="#eef3fe"/><path d="M.5 1.5h6M.5 3.5h6M.5 5.5h6M.5 7.5h6" stroke="#8ea5d8"/></svg></div><div class="sbb" style="top:413px"><svg style="left:2px;top:4px" width="8" height="6" viewBox="0 0 8 6"><path d="M.7 1.2L4 4.5L7.3 1.2" fill="none" stroke="#4d6185" stroke-width="2"/></svg></div></div>
</div></div>
</div>
<svg style="left:0;top:0" width="908" height="650" viewBox="0 0 908 650"><g fill="#f0383c"><path d="M153.6 352.3L137.4 368.8L133.4 365.4L129.8 381.3L145.3 374.8L141.4 372.2Z"/><path d="M23 394.3L12 406L15.6 407.6L10 429.6L21.6 409.2L26 410.2Z"/></g></svg>
</body>
</html>
